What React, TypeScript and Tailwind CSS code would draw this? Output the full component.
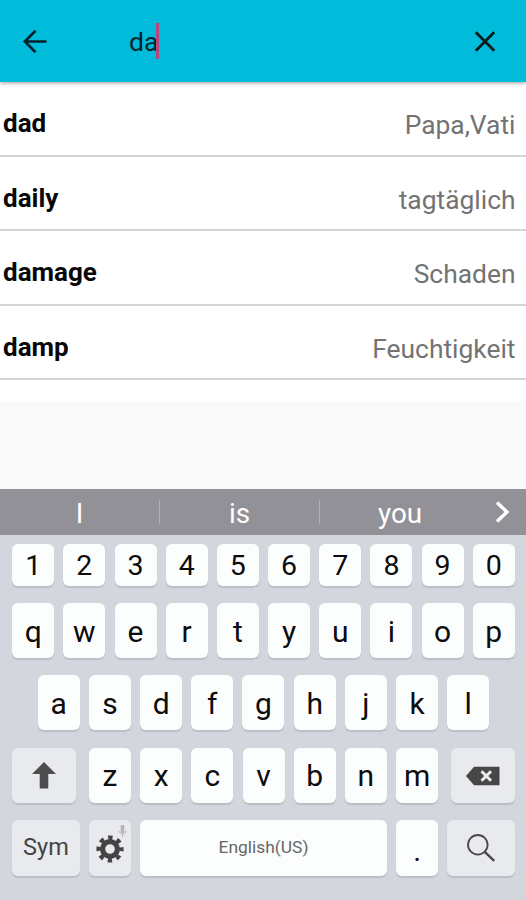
import React, { useState } from 'react';

const words = [
  { word: 'dad', translation: 'Papa,Vati' },
  { word: 'daily', translation: 'tagtäglich' },
  { word: 'damage', translation: 'Schaden' },
  { word: 'damp', translation: 'Feuchtigkeit' },
];

const suggestions = ['I', 'is', 'you'];

const keyBase = 'flex items-center justify-center rounded-[6px] shadow-[0_2px_1px_#bbbfc5]';
const lightKey = `${keyBase} bg-[#fcfdfd] text-[#0c0c0c]`;
const grayKey = `${keyBase} bg-[#e8eaee] text-[#444444]`;

const LetterKey: React.FC<{ label: string; onPress: (key: string) => void }> = ({ label, onPress }) => (
  <button className={`${lightKey} h-[55px] w-[42px] shrink-0 pt-[2px] text-[30px] leading-none`} onClick={() => onPress(label)}>
    {label}
  </button>
);

const App: React.FC = () => {
  const [query, setQuery] = useState('da');

  const press = (key: string) => setQuery(query + key);

  return (
    <div className="flex h-[900px] w-[526px] flex-col overflow-hidden bg-[#fafafa] font-[Roboto,sans-serif]">
      {/* Search bar */}
      <header className="z-10 flex h-[82px] shrink-0 items-center bg-[#00bcda] pl-[23px] pr-[30px] shadow-[0_1px_4px_rgba(0,0,0,0.4)]">
        <button className="shrink-0" aria-label="Back">
          <svg width="24" height="24" viewBox="0 0 24 24" fill="none" stroke="#04222a" strokeWidth="2.7">
            <path d="M23.5 12.5H2M12.5 1.7 1.8 12.5l10.7 10.8" />
          </svg>
        </button>
        <div className="ml-[82px] flex flex-1 items-center">
          <span className="pt-[3px] text-[26.5px] leading-none text-[#04222a]">{query}</span>
          <span className="-ml-[2px] h-[36px] w-[3px] bg-[#b8467c]" />
        </div>
        <button className="shrink-0" aria-label="Clear" onClick={() => setQuery('')}>
          <svg width="22" height="22" viewBox="0 0 22 22" fill="none" stroke="#04181c" strokeWidth="2.7">
            <path d="m1.8 2.3 18.4 18.4M20.2 2.3 1.8 20.7" />
          </svg>
        </button>
      </header>

      {/* Word list */}
      <ul className="h-[319px] shrink-0 bg-white">
        {words.map((item) => (
          <li key={item.word} className="flex h-[74.6px] items-center justify-between border-b-2 border-[#d4d4d4] pl-[3px] pr-[10.5px]">
            <span className="pt-[10px] text-[26px] leading-[30px] font-bold text-[#080808]">{item.word}</span>
            <span className="pt-[14px] text-[26.4px] leading-[30px] text-[#737373]">{item.translation}</span>
          </li>
        ))}
      </ul>

      <div className="flex-1" />

      {/* Suggestions */}
      <div className="flex h-[46px] shrink-0 items-center bg-[#929197] text-[27.8px] text-white">
        {suggestions.map((s, i) => (
          <div key={s} className={`flex h-[24px] w-[160px] items-center justify-center pt-[4px] ${i < 2 ? 'border-r border-[#b0afb4]' : ''}`}>
            {s}
          </div>
        ))}
        <svg className="ml-[15px]" width="15" height="22" viewBox="0 0 15 22" fill="none" stroke="white" strokeWidth="3.4">
          <path d="m2 1.5 10 9.5L2 20.5" />
        </svg>
      </div>

      {/* Keyboard */}
      <div className="flex h-[365px] shrink-0 flex-col bg-[#d3d6dc] pl-[12.2px] pr-[11.2px] pt-[9px]">
        <div className="flex justify-between">
          {'1234567890'.split('').map((n) => (
            <button key={n} className={`${lightKey} h-[42px] w-[42px] pt-[2px] text-[28.5px] leading-none`} onClick={() => press(n)}>
              {n}
            </button>
          ))}
        </div>

        <div className="mt-[17px] flex justify-between">
          {'qwertyuiop'.split('').map((l) => <LetterKey key={l} label={l} onPress={press} />)}
        </div>

        <div className="mt-[17px] flex justify-between px-[25.6px]">
          {'asdfghjkl'.split('').map((l) => <LetterKey key={l} label={l} onPress={press} />)}
        </div>

        <div className="mt-[17.5px] flex justify-between">
          <button className={`${grayKey} h-[55px] w-[63.5px]`} aria-label="Shift">
            <svg width="24" height="27" viewBox="0 0 24 27" fill="#4d4d4d">
              <path d="M12 0 24 12h-7.7v14.5H7.7V12H0z" />
            </svg>
          </button>
          <div className="flex gap-[9.2px]">
            {'zxcvbnm'.split('').map((l) => <LetterKey key={l} label={l} onPress={press} />)}
          </div>
          <button className={`${grayKey} h-[55px] w-[63.5px]`} aria-label="Delete" onClick={() => setQuery(query.slice(0, -1))}>
            <svg className="mt-[1px]" width="34" height="20" viewBox="0 0 34 20">
              <path d="M0 10 8 .8h25.5v18.4H8z" fill="#474747" />
              <path d="m15.5 5.3 9.5 9.4M25 5.3l-9.5 9.4" stroke="#ededed" strokeWidth="3" />
            </svg>
          </button>
        </div>

        <div className="mt-[17px] flex justify-between">
          <button className={`${grayKey} h-[56px] w-[67.5px] pt-[1px] text-[23.5px]`}>Sym</button>
          <button className={`${grayKey} relative h-[56px] w-[42px]`} aria-label="Settings">
            <svg className="mt-[3px]" width="28" height="28" viewBox="0 0 28 28" fill="none" stroke="#444444">
              <circle cx="14" cy="14" r="7.4" strokeWidth="5.2" />
              <circle cx="14" cy="14" r="11.2" strokeWidth="4.8" strokeDasharray="4.3 4.496" strokeDashoffset="2.15" />
            </svg>
            <svg className="absolute right-[4px] top-[5px]" width="9" height="12" viewBox="0 0 9 12" fill="none" stroke="#b4b4b6">
              <path d="M4.5 1.5v5" strokeWidth="3.6" strokeLinecap="round" />
              <path d="M1 5.5c0 4.5 7 4.5 7 0M4.5 9v3" />
            </svg>
          </button>
          <button className={`${lightKey} h-[56px] w-[247px] text-[17.4px]`} onClick={() => press(' ')}>
            <span className="text-[#666666]">English(US)</span>
          </button>
          <button className={`${lightKey} h-[56px] w-[42px] pt-[6px] text-[30px]`} onClick={() => press('.')}>.</button>
          <button className={`${grayKey} h-[56px] w-[67.5px]`} aria-label="Search">
            <svg width="28" height="28" viewBox="0 0 28 28" fill="none" stroke="#484848">
              <circle cx="10.8" cy="10.8" r="9.8" strokeWidth="1.8" />
              <path d="m17.8 17.8 9.4 9.2" strokeWidth="2.4" />
            </svg>
          </button>
        </div>
      </div>
    </div>
  );
};

export default App;
